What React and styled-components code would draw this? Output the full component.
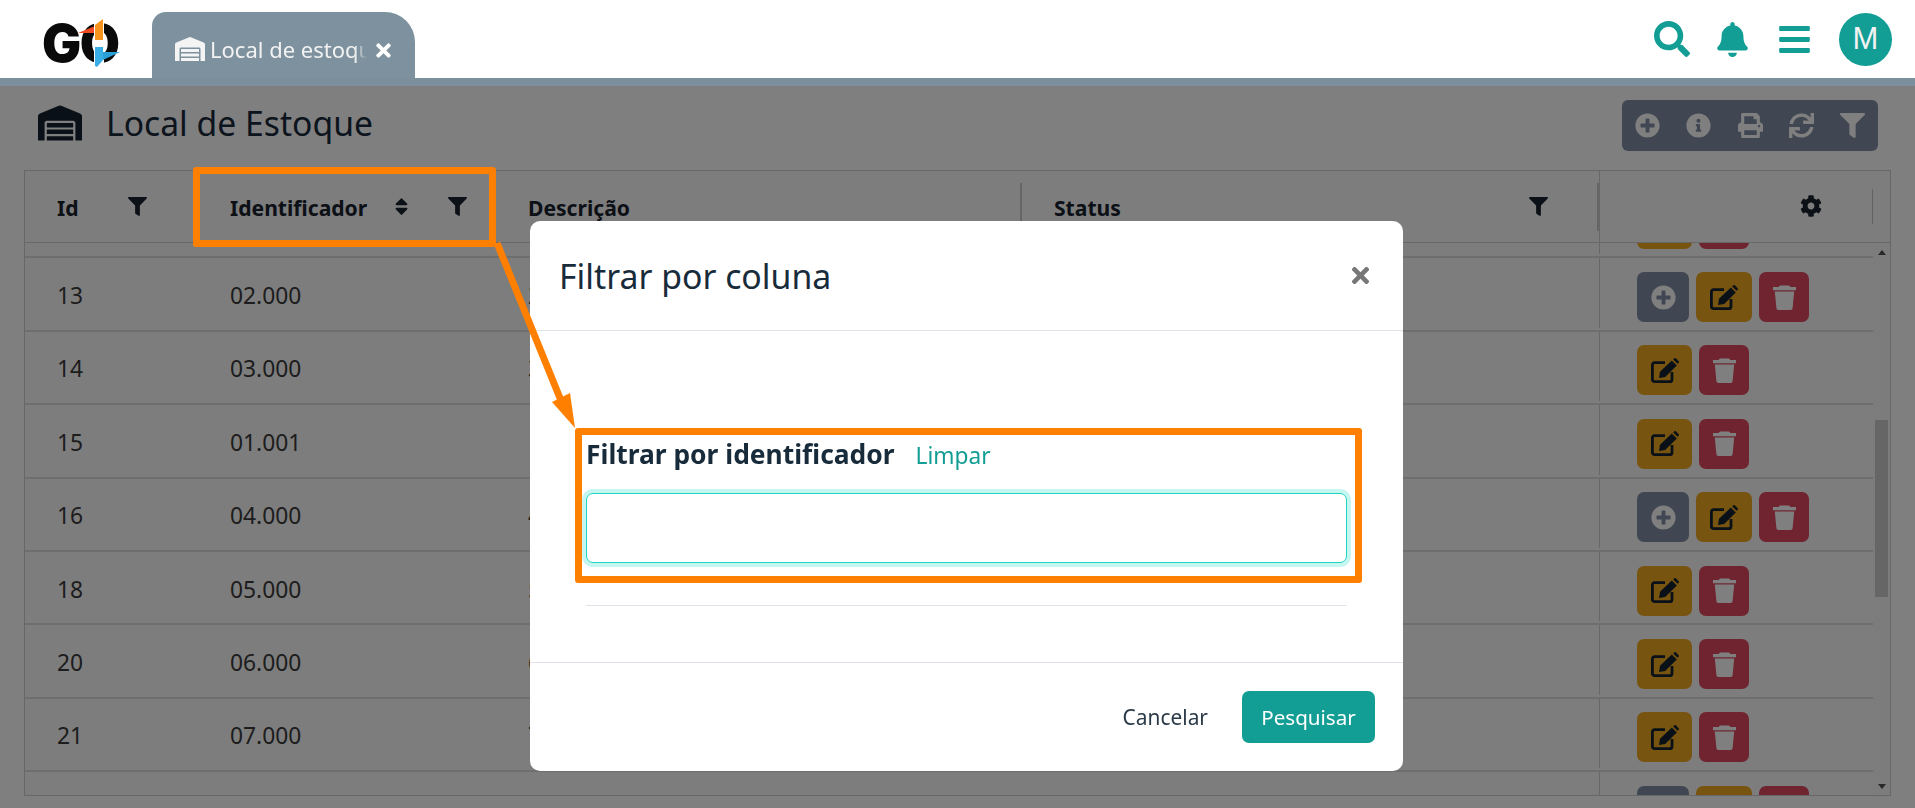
import React from "react"
import styled, { createGlobalStyle } from "styled-components"
import {
  FaBars,
  FaBell,
  FaCog,
  FaFilter,
  FaInfoCircle,
  FaPlusCircle,
  FaPrint,
  FaSearch,
  FaSort,
  FaSync,
  FaTimes,
  FaWarehouse,
} from "react-icons/fa"

const GlobalStyle = createGlobalStyle`
  html, body {
    margin: 0;
    height: 100%;
    overflow: hidden;
    background: #fff;
    font-family: "Noto Sans", "Open Sans", sans-serif;
  }
  * { box-sizing: border-box; }
`

const columns = "173px 298px 526px 577px 1fr"

const Shell = styled.div`
  height: 808px;
  display: flex;
  flex-direction: column;
`

const TopBar = styled.header`
  position: relative;
  z-index: 3;
  height: 86px;
  flex: none;
  background: #fff;
  border-bottom: 8px solid #7b909c;
  display: flex;
  align-items: flex-end;
  padding-left: 39px;
`

const Logo = styled.svg`
  width: 90px;
  height: 52px;
  margin-bottom: 8px;
  margin-right: 23px;
  flex: none;
`

const Tab = styled.div`
  width: 263px;
  height: 66px;
  background: #7d929e;
  border-radius: 14px 30px 0 0;
  display: flex;
  align-items: center;
  padding: 8px 0 0 23px;
  color: #f2f2f2;
  flex: none;
  font-size: 22px;

  svg {
    flex: none;
  }
`

const TabLabel = styled.span`
  width: 157px;
  margin-left: 5px;
  overflow: hidden;
  white-space: nowrap;
  mask-image: linear-gradient(to right, #000 92%, transparent 100%);
`

const TabClose = styled(FaTimes)`
  color: #fff;
  font-size: 21px;
  margin-left: 6px;
  margin-top: 2px;
`

const NavIcons = styled.nav`
  margin-left: auto;
  height: 78px;
  display: flex;
  align-items: center;
  padding-right: 23px;
  color: #129e94;
`

const NavIcon = styled.span`
  display: flex;
  font-size: ${p => p.$size}px;
  margin-right: ${p => p.$gap}px;
`

const Avatar = styled.div`
  width: 53px;
  height: 53px;
  border-radius: 50%;
  background: #129e94;
  color: #f2f2f2;
  font-family: "Liberation Sans", sans-serif;
  font-size: 31px;
  display: flex;
  align-items: center;
  justify-content: center;
`

const Page = styled.main`
  flex: 1;
  min-height: 0;
  padding: 0 24px;
  display: flex;
  flex-direction: column;
`

const TitleRow = styled.div`
  height: 84px;
  flex: none;
  display: flex;
  align-items: center;
  padding: 0 13px 5px 14px;
`

const PageTitle = styled.h1`
  margin: 0 0 6px 24px;
  font-size: 33.7px;
  font-weight: 400;
  color: #18283a;
`

const TitleIcon = styled(FaWarehouse)`
  font-size: 44px;
  color: #14202e;
  margin-bottom: 6px;
`

const Toolbar = styled.div`
  margin-left: auto;
  width: 256px;
  height: 51px;
  border-radius: 6px;
  background: #828ea4;
  display: flex;
  align-items: center;
  color: #fff;
`

const ToolButton = styled.span`
  flex: 1;
  display: flex;
  justify-content: center;
  font-size: 25px;
`

const Table = styled.section`
  height: 626px;
  flex: none;
  border: 1px solid #cfcfcf;
  background: #fafafa;
  display: flex;
  flex-direction: column;
  overflow: hidden;
`

const HeadRow = styled.div`
  height: 72px;
  flex: none;
  display: grid;
  grid-template-columns: ${columns};
  border-bottom: 1px solid #cfcfcf;
`

const HeadCell = styled.div`
  position: relative;
  display: flex;
  align-items: center;
  padding: 2px 0 0 32px;
  font-size: 21.1px;
  font-weight: 700;
  color: #18222e;
`

const HeadIcon = styled.span`
  display: flex;
  font-size: ${p => p.$size || 19}px;
  margin-left: ${p => p.$left}px;
  margin-top: -2px;
`

const ColumnEdge = styled.i`
  position: absolute;
  right: 0;
  top: 12px;
  height: 48px;
  width: 2px;
  background: #cbcbcb;
`

const ActionsHead = styled(HeadCell)`
  border-left: 1px solid #cfcfcf;
  padding: 0 17px 0 0;
  justify-content: flex-end;
`

const ActionsEdge = styled.i`
  width: 1px;
  height: 35px;
  background: #c4c4c4;
  margin-left: 50px;
`

const Body = styled.div`
  flex: 1;
  min-height: 0;
  display: flex;
  overflow: hidden;
`

const Rows = styled.div`
  flex: 1;
  min-width: 0;
  margin-top: -58px;
`

const Row = styled.div`
  height: 73.4px;
  display: grid;
  grid-template-columns: ${columns};
  border-bottom: 2px solid #dcdcdc;
  color: #3a3a3a;
  font-size: 22.8px;
`

const Cell = styled.div`
  display: flex;
  align-items: center;
  padding-left: 32px;
  padding-top: 3px;
  white-space: nowrap;
`

const ActionCell = styled.div`
  display: flex;
  align-items: center;
  gap: 7px;
  padding: 8px 0 0 37px;
  border-left: 1px solid #cfcfcf;
  margin-bottom: 2px;
`

const ActionButton = styled.button`
  width: ${p => p.$width}px;
  height: 50px;
  border: none;
  padding: 0;
  border-radius: 7px;
  background: ${p => p.$bg};
  color: ${p => p.$color};
  font-size: 25px;
  display: flex;
  align-items: center;
  justify-content: center;
`

const ScrollTrack = styled.div`
  width: 17px;
  flex: none;
  position: relative;
  background: #f8f8f8;
  padding: 177px 2px 0;
`

const ScrollThumb = styled.div`
  height: 177px;
  background: #cdcdcd;
`

const ScrollArrow = styled.i`
  position: absolute;
  left: 5px;
  width: 0;
  height: 0;
  border-left: 4px solid transparent;
  border-right: 4px solid transparent;
  ${p =>
    p.$down
      ? "bottom: 6px; border-top: 5px solid #505050;"
      : "top: 7px; border-bottom: 5px solid #505050;"}
`

const Backdrop = styled.div`
  position: fixed;
  left: 0;
  right: 0;
  top: 86px;
  bottom: 0;
  z-index: 1;
  background: rgba(0, 0, 0, 0.5);
`

const Modal = styled.div`
  position: fixed;
  z-index: 2;
  left: 530px;
  top: 221px;
  width: 873px;
  height: 550px;
  background: #fff;
  border-radius: 10px;
  display: flex;
  flex-direction: column;
`

const ModalHeader = styled.div`
  height: 110px;
  flex: none;
  border-bottom: 1px solid #e2e2ea;
  display: flex;
  align-items: center;
  justify-content: space-between;
  padding: 0 30px 0 29px;
`

const ModalTitle = styled.h2`
  margin: 0;
  font-size: 33.8px;
  font-weight: 400;
  color: #182b3a;
`

const ModalClose = styled(FaTimes)`
  font-size: 25px;
  color: #777;
  margin-bottom: 1px;
`

const ModalBody = styled.div`
  flex: 1;
  padding: 0 56px;
  display: flex;
  flex-direction: column;
`

const FieldLabelRow = styled.div`
  margin-top: 105px;
  display: flex;
  align-items: baseline;
  gap: 21px;
  height: 57px;
`

const FieldLabel = styled.label`
  font-size: 26.4px;
  font-weight: 700;
  color: #182b3a;
`

const ClearLink = styled.a`
  font-size: 22.7px;
  color: #129e94;
`

const FieldInput = styled.input`
  width: 761px;
  height: 70px;
  flex: none;
  border: 1px solid #1dd5c5;
  border-radius: 7px;
  box-shadow: 0 0 0 4px #c6f6f0;
  outline: none;
  background: #fff;
`

const Rule = styled.hr`
  width: 761px;
  margin: 42px 0 0;
  border: none;
  border-top: 1px solid #e2e2ea;
`

const ModalFooter = styled.div`
  height: 109px;
  flex: none;
  border-top: 1px solid #e2e2ea;
  display: flex;
  align-items: center;
  justify-content: flex-end;
  gap: 34px;
  padding: 0 28px 0 0;
`

const CancelLink = styled.a`
  font-size: 20.9px;
  color: #2a3a48;
`

const SearchButton = styled.button`
  width: 133px;
  height: 52px;
  border: none;
  border-radius: 7px;
  background: #129e94;
  color: #fff;
  font-family: inherit;
  font-size: 20.6px;
`

const HeaderHighlight = styled.div`
  position: fixed;
  z-index: 4;
  left: 193px;
  top: 167px;
  width: 303px;
  height: 80px;
  border: 7px solid #ff8000;
  border-radius: 3px;
`

const FieldHighlight = styled.div`
  position: fixed;
  z-index: 4;
  left: 575px;
  top: 428px;
  width: 787px;
  height: 155px;
  border: 7px solid #ff8000;
  border-radius: 3px;
`

const Pointer = styled.svg`
  position: fixed;
  z-index: 4;
  left: 480px;
  top: 240px;
  width: 110px;
  height: 200px;
`

const EditIcon = () => (
  <svg width="28" height="25" viewBox="0 0 28 25">
    <path
      d="M14 4.7H3.6a2.2 2.2 0 0 0-2.2 2.2v14.5a2.2 2.2 0 0 0 2.2 2.2h15.2a2.2 2.2 0 0 0 2.2-2.2V14"
      fill="none"
      stroke="currentColor"
      strokeWidth="2.8"
    />
    <path d="M8 20l1-6.2L20.8 2.6l5 5L14.2 19z" fill="currentColor" />
    <path d="M22.2 1.4L23.4.3a1 1 0 0 1 1.4 0l2.9 2.9a1 1 0 0 1 0 1.4l-1.1 1.2z" fill="currentColor" />
  </svg>
)

const TrashIcon = () => (
  <svg width="23" height="25" viewBox="0 0 23 25">
    <path d="M5.5 2L7 .5h9L17.5 2H23v3.2H0V2z" fill="currentColor" />
    <path d="M1.8 6.6h19.4l-1.6 16.4a2 2 0 0 1-2 2H5.4a2 2 0 0 1-2-2z" fill="currentColor" />
  </svg>
)

const rows = [
  { id: "12", code: "01.000", text: "", add: false },
  { id: "13", code: "02.000", text: "2", add: true },
  { id: "14", code: "03.000", text: "3", add: false },
  { id: "15", code: "01.001", text: "1", add: false },
  { id: "16", code: "04.000", text: "4", add: true },
  { id: "18", code: "05.000", text: "5", add: false },
  { id: "20", code: "06.000", text: "6", add: false },
  { id: "21", code: "07.000", text: "7", add: false },
  { id: "22", code: "08.000", text: "8", add: true },
]

const App = () => (
  <Shell>
    <GlobalStyle />
    <TopBar>
      <Logo viewBox="0 0 90 52">
        <text x="3" y="44" fontFamily="Inter, Liberation Sans, sans-serif" fontWeight="900" fontSize="52" letterSpacing="-1.5" fill="#0a0a0a">
          GO
        </text>
        <polygon points="39,15 56,8 56,15" fill="#ef4a23" />
        <rect x="55" y="0" width="10" height="50" fill="#fff" />
        <path d="M56 7 L64 1 V22 H56 Z" fill="#f7941d" />
        <path d="M56 29 H64 V42 L58 49 L56 48 Z" fill="#39aee6" />
        <polygon points="64,42 64,34 81,34" fill="#2a9fd8" />
      </Logo>
      <Tab>
        <FaWarehouse size={30} color="#f4f4f4" />
        <TabLabel>Local de estoque</TabLabel>
        <TabClose />
      </Tab>
      <NavIcons>
        <NavIcon $size={36} $gap={25}><FaSearch /></NavIcon>
        <NavIcon $size={35} $gap={27}><FaBell /></NavIcon>
        <NavIcon $size={35} $gap={27}><FaBars /></NavIcon>
        <Avatar>M</Avatar>
      </NavIcons>
    </TopBar>

    <Page>
      <TitleRow>
        <TitleIcon />
        <PageTitle>Local de Estoque</PageTitle>
        <Toolbar>
          <ToolButton><FaPlusCircle /></ToolButton>
          <ToolButton><FaInfoCircle /></ToolButton>
          <ToolButton><FaPrint /></ToolButton>
          <ToolButton><FaSync /></ToolButton>
          <ToolButton><FaFilter /></ToolButton>
        </Toolbar>
      </TitleRow>

      <Table>
        <HeadRow>
          <HeadCell>
            Id
            <HeadIcon $left={49}><FaFilter /></HeadIcon>
          </HeadCell>
          <HeadCell>
            Identificador
            <HeadIcon $left={24} $size={21}><FaSort /></HeadIcon>
            <HeadIcon $left={36}><FaFilter /></HeadIcon>
          </HeadCell>
          <HeadCell>
            Descrição
            <ColumnEdge />
          </HeadCell>
          <HeadCell>
            Status
            <HeadIcon $left={408}><FaFilter /></HeadIcon>
            <ColumnEdge />
          </HeadCell>
          <ActionsHead>
            <HeadIcon $size={22}><FaCog /></HeadIcon>
            <ActionsEdge />
          </ActionsHead>
        </HeadRow>
        <Body>
          <Rows>
            {rows.map(row => (
              <Row key={row.id}>
                <Cell>{row.id}</Cell>
                <Cell>{row.code}</Cell>
                <Cell>{row.text}</Cell>
                <Cell />
                <ActionCell>
                  {row.add && (
                    <ActionButton $width={52} $bg="#828ea4" $color="#fff">
                      <FaPlusCircle />
                    </ActionButton>
                  )}
                  <ActionButton $width={row.add ? 56 : 55} $bg="#efab20" $color="#14202e">
                    <EditIcon />
                  </ActionButton>
                  <ActionButton $width={50} $bg="#de4860" $color="#fff">
                    <TrashIcon />
                  </ActionButton>
                </ActionCell>
              </Row>
            ))}
          </Rows>
          <ScrollTrack>
            <ScrollArrow />
            <ScrollThumb />
            <ScrollArrow $down />
          </ScrollTrack>
        </Body>
      </Table>
    </Page>

    <Backdrop />

    <Modal>
      <ModalHeader>
        <ModalTitle>Filtrar por coluna</ModalTitle>
        <ModalClose />
      </ModalHeader>
      <ModalBody>
        <FieldLabelRow>
          <FieldLabel>Filtrar por identificador</FieldLabel>
          <ClearLink>Limpar</ClearLink>
        </FieldLabelRow>
        <FieldInput />
        <Rule />
      </ModalBody>
      <ModalFooter>
        <CancelLink>Cancelar</CancelLink>
        <SearchButton>Pesquisar</SearchButton>
      </ModalFooter>
    </Modal>

    <HeaderHighlight />
    <FieldHighlight />
    <Pointer viewBox="0 0 110 200">
      <line x1="17" y1="3" x2="84" y2="168" stroke="#ff8000" strokeWidth="7" />
      <polygon points="72,162 90,153 95,188" fill="#ff8000" />
    </Pointer>
  </Shell>
)

export default App
